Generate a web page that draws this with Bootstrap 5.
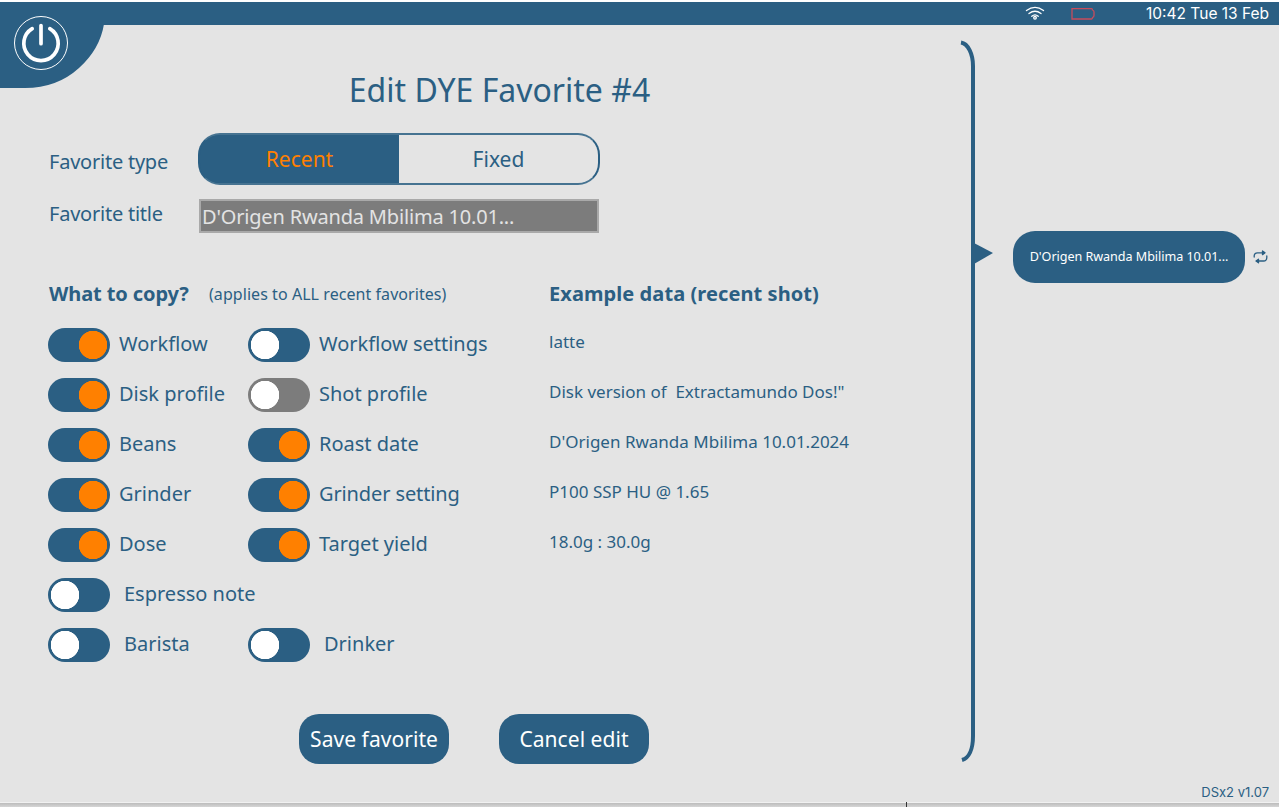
<!DOCTYPE html>
<html lang="en">
<head>
<meta charset="utf-8">
<title>Edit DYE Favorite</title>
<link href="https://cdn.jsdelivr.net/npm/bootstrap@5.3.0/dist/css/bootstrap.min.css" rel="stylesheet">
<style>
:root{--blue:#2b5f83;--bg:#e4e4e4;--orange:#ff8000}
body{width:1279px;height:807px;background:var(--bg);color:var(--blue);font-family:"Noto Sans",sans-serif;font-size:20px;line-height:30px;overflow:hidden}
.status{height:25px;border-top:2px solid #fff;background:var(--blue);font:15.5px/23px Inter,sans-serif;padding-right:10px}
.status .clock{width:123px;margin-left:51px;white-space:nowrap}
.corner{left:0;top:2px}
.editor{width:960px;padding-left:49px}
.title{font-size:32px;line-height:44px;width:901px;padding-top:43px;height:108px}
.lbl{width:150px;white-space:nowrap;letter-spacing:-.23px}
.seg{width:402px;height:52px;margin-left:-1px;border:2px solid var(--blue);border-top-color:#467391;border-bottom-color:#467391;border-radius:22px;font-size:21px;overflow:hidden;background:linear-gradient(90deg,var(--blue) 200px,transparent 200px) border-box}
.seg .on{background:var(--blue);color:var(--orange)}
.titlebox{width:400px;height:34px;background:#7c7c7c;border:2px solid #a9a9a9;color:#e3e3e3;border-radius:0;padding:0 0 0 1px;font-size:20px;letter-spacing:-.18px}
.heads{margin-top:36px;height:50px}
.opts{display:grid;grid-template-columns:200px 300px 1fr;grid-auto-rows:50px;white-space:nowrap;padding-top:1px}
.opt{gap:9px;margin-left:-1px}
.opt.wide{gap:14px}
.opt span{position:relative;top:-1px}
.opts small{font-size:17px;line-height:24px;padding-top:10px;white-space:pre}
.form-check-input.sw{width:62px;height:34px;margin:0;border:0;border-radius:17px;background-color:var(--blue);background-image:radial-gradient(circle 14.5px at 17px 17px,#fff 96%,transparent 100%);background-position:0 0;background-size:100% 100%;opacity:1;flex:none;transition:none}
.form-check-input.sw:checked{background-color:var(--blue);background-image:radial-gradient(circle 14.5px at 45px 17px,var(--orange) 96%,transparent 100%)}
.form-check-input.sw:disabled{background-color:#7c7c7c;opacity:1}
.act{width:150px;height:50px;background:var(--blue)!important;border:0;border-radius:20px;color:#fff!important;font-size:21px;padding:2px 0 0;white-space:nowrap;letter-spacing:.05px}
.pill{width:232px;height:52px;background:var(--blue)!important;border:0;border-radius:22px;color:#fff!important;font-size:12.6px;padding:1px 0 0;white-space:nowrap;letter-spacing:-.05px}
.version{font:13px/18px Inter,sans-serif}
.edge{height:5px;border-top:1px solid #f1f1f1;background:linear-gradient(#bcbcbc,#d6d6d6)}
.tick{left:906px;top:802px;width:1px;height:5px;background:#333}
</style>
</head>
<body class="d-flex flex-column position-relative">
<header class="status d-flex align-items-center justify-content-end text-white">
  <svg width="20" height="16" viewBox="0 0 20 16" fill="none" stroke="#fff" stroke-width="1.3" stroke-linecap="round"><path d="M1.500 4.500Q10 -1.800 18.500 4.500M4 7.500Q10 3 16 7.500M6.800 10.300Q10 7.600 13.200 10.300"/><circle cx="10" cy="11.800" r="1.300"/></svg>
  <svg style="margin-left:26px" width="24" height="14" viewBox="0 0 24 14" fill="none" stroke="#c64c5c" stroke-width="1.3"><path d="M1 1.700H20.500Q21.500 1.700 21.500 3Q23 3.500 23 5V8.500Q23 10 21.500 10.500Q21.500 12 20.500 12H1Z"/></svg>
  <span class="clock text-end">10:42 Tue 13 Feb</span>
</header>
<svg class="corner position-absolute" width="106" height="87" viewBox="0 2 106 87"><path d="M0 2H104V24Q100 49 79 68Q57 88 25 88H0Z" fill="#2b5f83"/><circle cx="41" cy="43" r="26.500" fill="none" stroke="#fff"/><path d="M32.200 28.600A17.200 17.200 0 1 0 49.800 28.600M41 25.500V43.700" fill="none" stroke="#fff" stroke-width="3.700" stroke-linecap="round"/></svg>
<main class="d-flex flex-grow-1">
  <section class="editor flex-shrink-0">
    <h1 class="title text-center m-0 fw-normal">Edit DYE Favorite #4</h1>
    <div class="d-flex align-items-center">
      <span class="lbl" style="padding-top:5px">Favorite type</span>
      <div class="seg d-flex text-center"><div class="on w-50 d-flex align-items-center justify-content-center">Recent</div><div class="w-50 d-flex align-items-center justify-content-center">Fixed</div></div>
    </div>
    <div class="d-flex" style="margin-top:14px">
      <label class="lbl" for="fav-title">Favorite title</label>
      <input id="fav-title" class="titlebox form-control" value="D'Origen Rwanda Mbilima 10.01...">
    </div>
    <div class="heads d-flex align-items-center text-nowrap">
      <b style="width:160px;letter-spacing:-.1px">What to copy?</b><span style="width:340px;font-size:16px;letter-spacing:.06px">(applies to ALL recent favorites)</span><b style="letter-spacing:.08px">Example data (recent shot)</b>
    </div>
    <div class="opts">
      <label class="opt d-flex align-items-center"><input type="checkbox" class="form-check-input sw" checked><span>Workflow</span></label>
      <label class="opt d-flex align-items-center"><input type="checkbox" class="form-check-input sw"><span>Workflow settings</span></label>
      <small>latte</small>
      <label class="opt d-flex align-items-center"><input type="checkbox" class="form-check-input sw" checked><span>Disk profile</span></label>
      <label class="opt d-flex align-items-center"><input type="checkbox" class="form-check-input sw" disabled><span>Shot profile</span></label>
      <small>Disk version of  Extractamundo Dos!"</small>
      <label class="opt d-flex align-items-center"><input type="checkbox" class="form-check-input sw" checked><span>Beans</span></label>
      <label class="opt d-flex align-items-center"><input type="checkbox" class="form-check-input sw" checked><span>Roast date</span></label>
      <small>D'Origen Rwanda Mbilima 10.01.2024</small>
      <label class="opt d-flex align-items-center"><input type="checkbox" class="form-check-input sw" checked><span>Grinder</span></label>
      <label class="opt d-flex align-items-center"><input type="checkbox" class="form-check-input sw" checked><span style="letter-spacing:-.12px">Grinder setting</span></label>
      <small>P100 SSP HU @ 1.65</small>
      <label class="opt d-flex align-items-center"><input type="checkbox" class="form-check-input sw" checked><span>Dose</span></label>
      <label class="opt d-flex align-items-center"><input type="checkbox" class="form-check-input sw" checked><span>Target yield</span></label>
      <small>18.0g : 30.0g</small>
      <label class="opt wide d-flex align-items-center"><input type="checkbox" class="form-check-input sw"><span>Espresso note</span></label><i></i><i></i>
      <label class="opt wide d-flex align-items-center"><input type="checkbox" class="form-check-input sw"><span>Barista</span></label>
      <label class="opt wide d-flex align-items-center"><input type="checkbox" class="form-check-input sw"><span>Drinker</span></label>
    </div>
    <div class="d-flex" style="margin:44px 0 0 250px;gap:50px">
      <button class="btn act">Save favorite</button><button class="btn act">Cancel edit</button>
    </div>
  </section>
  <svg class="flex-shrink-0" width="34" height="777" viewBox="960 25 34 777" fill="none"><path d="M961 42.500C968 43.500 973 54 973 66V736C973 749 969 758 962 760" stroke="#2b5f83" stroke-width="4"/><path d="M974 243L993 253L974 264Z" fill="#2b5f83"/></svg>
  <aside class="flex-grow-1 d-flex flex-column justify-content-between">
    <div class="d-flex align-items-center" style="margin:206px 0 0 19px;gap:8px">
      <button class="btn pill">D'Origen Rwanda Mbilima 10.01...</button>
      <svg width="15" height="14" viewBox="0 0 15 14" fill="none" stroke="#2b5f83" stroke-width="1.300" stroke-linecap="round" stroke-linejoin="round"><path d="M1.200 7V6Q1.200 2.800 4.500 2.800H11M13.800 6V7.500Q13.800 11 10.500 11H4"/><path d="M9.500 1L12 2.800L9.500 4.600ZM5.500 9.200L3 11L5.500 12.800Z" fill="#2b5f83"/></svg>
    </div>
    <div class="version text-end" style="padding:0 10px 1px 0">DSx2 v1.07</div>
  </aside>
</main>
<footer class="edge"></footer>
<div class="tick position-absolute"></div>
<script src="https://cdn.jsdelivr.net/npm/bootstrap@5.3.0/dist/js/bootstrap.bundle.min.js"></script>
</body>
</html>
